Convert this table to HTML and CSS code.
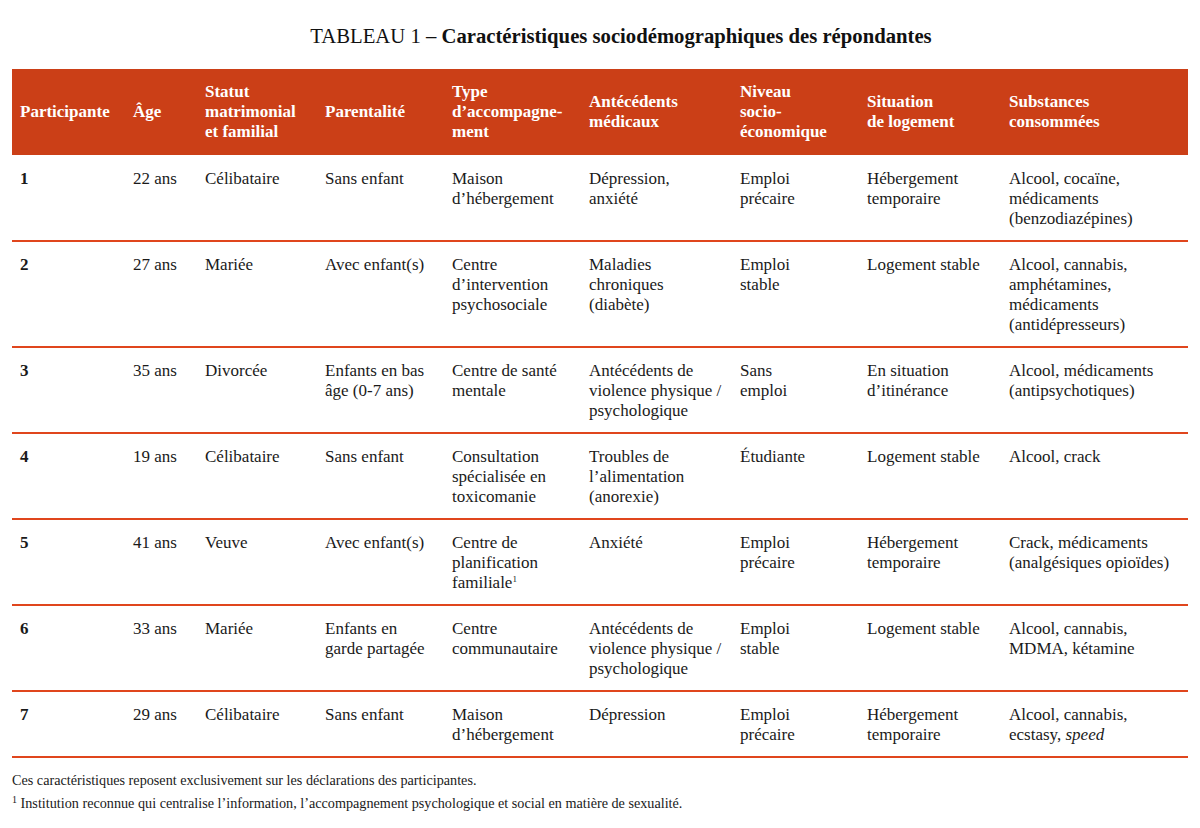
FILE: index.html
```html
<!DOCTYPE html>
<html lang="fr">
<head>
<meta charset="utf-8">
<link rel="stylesheet" href="styles.css">
</head>
<body>
<div class="page">
  <h1 class="title">TABLEAU 1 – <b>Caractéristiques sociodémographiques des répondantes</b></h1>
  <table class="tbl">
    <colgroup>
      <col class="c1"><col class="c2"><col class="c3"><col class="c4"><col class="c5"><col class="c6"><col class="c7"><col class="c8"><col class="c9">
    </colgroup>
    <thead>
      <tr>
        <th>Participante</th>
        <th>Âge</th>
        <th>Statut<br>matrimonial<br>et familial</th>
        <th>Parentalité</th>
        <th>Type<br>d’accompagne-<br>ment</th>
        <th>Antécédents<br>médicaux</th>
        <th>Niveau<br>socio-<br>économique</th>
        <th>Situation<br>de logement</th>
        <th>Substances<br>consommées</th>
      </tr>
    </thead>
    <tbody>
      <tr>
        <td class="num">1</td><td>22 ans</td><td>Célibataire</td><td>Sans enfant</td>
        <td>Maison<br>d’hébergement</td><td>Dépression,<br>anxiété</td><td>Emploi<br>précaire</td>
        <td>Hébergement<br>temporaire</td><td>Alcool, cocaïne,<br>médicaments<br>(benzodiazépines)</td>
      </tr>
      <tr>
        <td class="num">2</td><td>27 ans</td><td>Mariée</td><td>Avec enfant(s)</td>
        <td>Centre<br>d’intervention<br>psychosociale</td><td>Maladies<br>chroniques<br>(diabète)</td><td>Emploi<br>stable</td>
        <td>Logement stable</td><td>Alcool, cannabis,<br>amphétamines,<br>médicaments<br>(antidépresseurs)</td>
      </tr>
      <tr>
        <td class="num">3</td><td>35 ans</td><td>Divorcée</td><td>Enfants en bas<br>âge (0-7 ans)</td>
        <td>Centre de santé<br>mentale</td><td>Antécédents de<br>violence physique /<br>psychologique</td><td>Sans<br>emploi</td>
        <td>En situation<br>d’itinérance</td><td>Alcool, médicaments<br>(antipsychotiques)</td>
      </tr>
      <tr>
        <td class="num">4</td><td>19 ans</td><td>Célibataire</td><td>Sans enfant</td>
        <td>Consultation<br>spécialisée en<br>toxicomanie</td><td>Troubles de<br>l’alimentation<br>(anorexie)</td><td>Étudiante</td>
        <td>Logement stable</td><td>Alcool, crack</td>
      </tr>
      <tr>
        <td class="num">5</td><td>41 ans</td><td>Veuve</td><td>Avec enfant(s)</td>
        <td>Centre de<br>planification<br>familiale<sup>1</sup></td><td>Anxiété</td><td>Emploi<br>précaire</td>
        <td>Hébergement<br>temporaire</td><td>Crack, médicaments<br>(analgésiques opioïdes)</td>
      </tr>
      <tr>
        <td class="num">6</td><td>33 ans</td><td>Mariée</td><td>Enfants en<br>garde partagée</td>
        <td>Centre<br>communautaire</td><td>Antécédents de<br>violence physique /<br>psychologique</td><td>Emploi<br>stable</td>
        <td>Logement stable</td><td>Alcool, cannabis,<br>MDMA, kétamine</td>
      </tr>
      <tr>
        <td class="num">7</td><td>29 ans</td><td>Célibataire</td><td>Sans enfant</td>
        <td>Maison<br>d’hébergement</td><td>Dépression</td><td>Emploi<br>précaire</td>
        <td>Hébergement<br>temporaire</td><td>Alcool, cannabis,<br>ecstasy, <i>speed</i></td>
      </tr>
    </tbody>
  </table>
  <div class="notes">
    <p>Ces caractéristiques reposent exclusivement sur les déclarations des participantes.</p>
    <p><sup>1</sup> Institution reconnue qui centralise l’information, l’accompagnement psychologique et social en matière de sexualité.</p>
  </div>
</div>
</body>
</html>
```

FILE: styles.css
```css
html, body {
  margin: 0;
  padding: 0;
  background: #ffffff;
}
body {
  font-family: "Liberation Serif", "DejaVu Serif", serif;
  color: #1a1a1a;
}
.page {
  padding: 24px 12px 0 12px;
}
.title {
  margin: 0 0 20px 0;
  padding-left: 42px;
  text-align: center;
  font-size: 20.7px;
  font-weight: normal;
  line-height: 25px;
  color: #111;
}
.title b {
  font-weight: bold;
}
.tbl {
  width: 1176px;
  border-collapse: collapse;
  table-layout: fixed;
  font-size: 17px;
}
.c1 { width: 113px; }
.c2 { width: 72px; }
.c3 { width: 120px; }
.c4 { width: 127px; }
.c5 { width: 137px; }
.c6 { width: 151px; }
.c7 { width: 127px; }
.c8 { width: 142px; }
.c9 { width: 187px; }
.tbl th {
  background: #cb3f17;
  color: #ffffff;
  font-weight: bold;
  text-align: left;
  vertical-align: middle;
  line-height: 20px;
  height: 86px;
  padding: 0 2px 0 8px;
  box-sizing: border-box;
  white-space: nowrap;
}
.tbl td {
  vertical-align: top;
  line-height: 20px;
  padding: 13px 2px 11px 8px;
  border-bottom: 2px solid #e0461d;
  white-space: nowrap;
}
.tbl tbody tr:first-child td {
  padding-top: 14px;
}
.tbl td.num {
  font-weight: bold;
}
.tbl sup {
  font-size: 9px;
  line-height: 0;
  vertical-align: 6px;
}
.notes {
  padding-top: 11px;
  font-size: 14.2px;
  line-height: 23px;
}
.notes p {
  margin: 0;
}
.notes sup {
  font-size: 10px;
  line-height: 0;
  vertical-align: 5px;
}
```
